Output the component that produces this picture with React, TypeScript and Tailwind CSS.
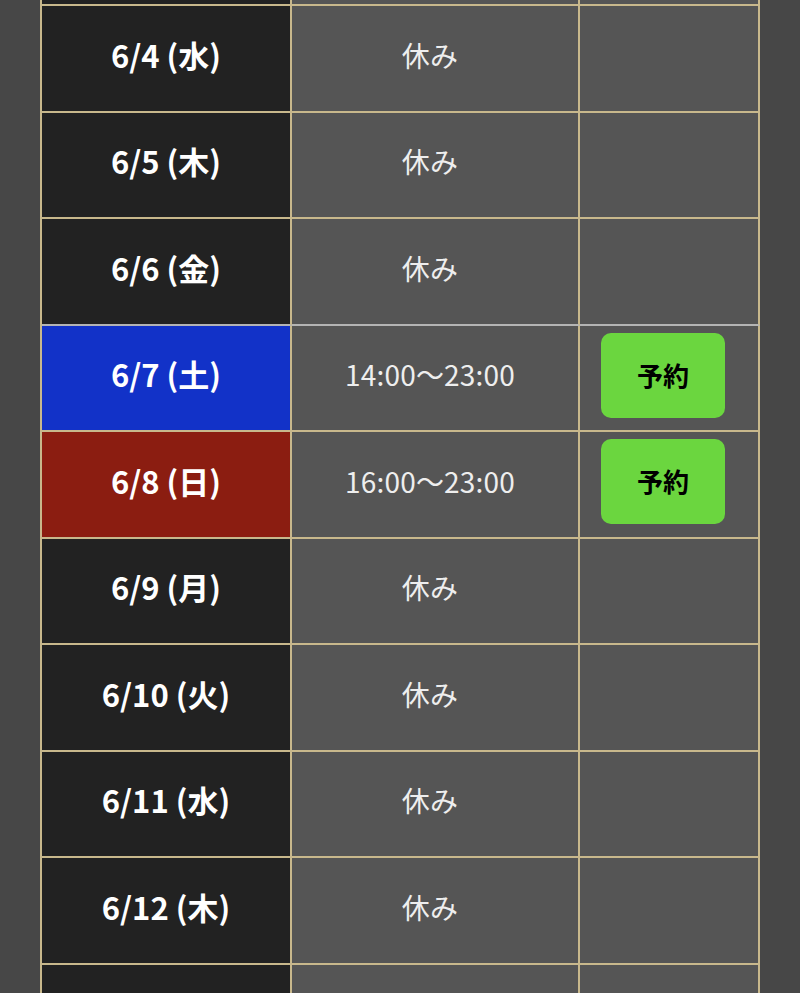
const rows = [
  { date: "", time: "" },
  { date: "6/4 (水)", time: "休み" },
  { date: "6/5 (木)", time: "休み" },
  { date: "6/6 (金)", time: "休み", grayBottom: true },
  { date: "6/7 (土)", time: "14:00〜23:00", tone: "sat", open: true },
  { date: "6/8 (日)", time: "16:00〜23:00", tone: "sun", open: true },
  { date: "6/9 (月)", time: "休み" },
  { date: "6/10 (火)", time: "休み" },
  { date: "6/11 (水)", time: "休み" },
  { date: "6/12 (木)", time: "休み" },
  { date: "", time: "" },
];

export default function App() {
  return (
    <div
      className="h-[993px] w-[800px] overflow-hidden bg-[#474747] px-[40px]"
      style={{ fontFamily: '"Noto Sans CJK JP", "Noto Sans", sans-serif' }}
    >
      <div className="mt-[-100.5px] border-l-2 border-[#c8b88c]">
        {rows.map((r, i) => {
          const borderB = r.grayBottom ? "border-b-[#b4b4b4]" : "border-b-[#c8b88c]";
          const dateBg =
            r.tone === "sat" ? "bg-[#1232c8]" : r.tone === "sun" ? "bg-[#8b1d11]" : "bg-[#222222]";
          return (
            <div key={i} className="grid h-[106.5px] grid-cols-[250px_288px_180px]">
              <div
                className={`flex items-center justify-center border-r-2 border-b-2 border-r-[#c8b88c] ${borderB} ${dateBg} pb-[7px] text-[31px] font-bold text-white`}
              >
                {r.date}
              </div>
              <div
                className={`flex items-center justify-center border-r-2 border-b-2 border-r-[#c8b88c] ${borderB} bg-[#555555] pr-[10px] pb-[7px] text-[28px] tracking-[0.2px] text-[#eeeeee]`}
              >
                {r.time}
              </div>
              <div
                className={`flex items-start border-r-2 border-b-2 border-r-[#c8b88c] ${borderB} bg-[#555555] pl-[21px] pt-[7px]`}
              >
                {r.open && (
                  <button className="flex h-[85px] w-[124px] items-center justify-center rounded-[10px] bg-[#6bd63f] pb-[2px] text-[26px] font-bold text-black">
                    予約
                  </button>
                )}
              </div>
            </div>
          );
        })}
      </div>
    </div>
  );
}
